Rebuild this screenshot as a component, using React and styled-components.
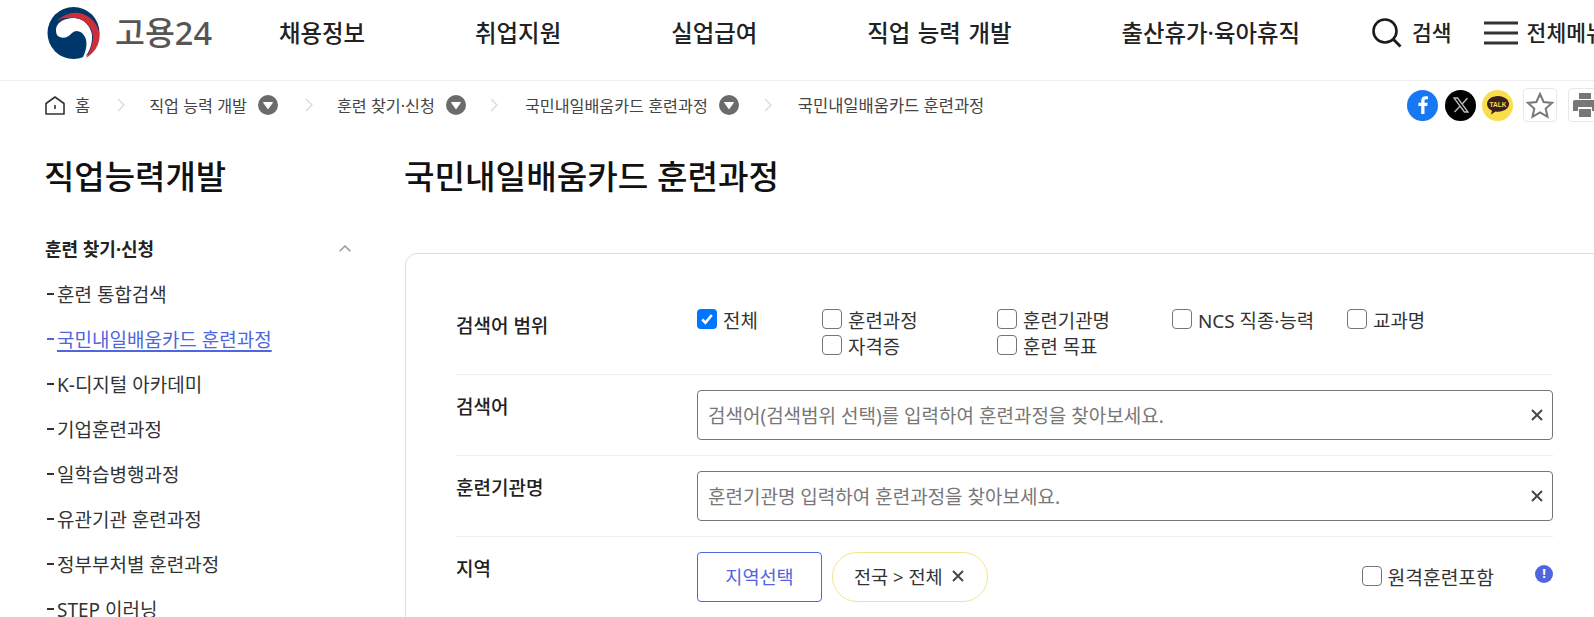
import React from "react";
import styled, { createGlobalStyle } from "styled-components";

const Global = createGlobalStyle`
  html, body { margin: 0; padding: 0; background: #fff; overflow: hidden; }
  body { font-family: "Noto Sans", "Noto Sans CJK KR", sans-serif; color: #222; }
  * { box-sizing: border-box; }
`;
const Page = styled.div`width: 1594px; height: 617px; overflow: hidden;`;
const Header = styled.header`
  height: 81px; border-bottom: 1px solid #eee; display: flex; align-items: flex-start;
  padding: 7px 0 0 47px; white-space: nowrap;
`;
const Logo = styled.div`display: flex; align-items: center; width: 232px; flex: none; height: 52px;`;
const LogoText = styled.span`
  margin-left: 14px; font-size: 32.5px; font-weight: 500; color: #555; letter-spacing: 0; line-height: 52px;
`;
const Nav = styled.nav`display: flex; gap: 110px; flex: none; height: 52px; align-items: center; padding-bottom: 2px;`;
const NavItem = styled.a`font-size: 23.4px; font-weight: 500; color: #222; word-spacing: 1.5px;`;
const Tools = styled.div`display: flex; align-items: center; height: 52px; margin-left: 72px; flex: none;`;
const ToolLabel = styled.span`font-size: 21.5px; font-weight: 500; color: #222; margin-left: ${p => p.$ml}px; margin-right: ${p => p.$mr || 0}px; margin-bottom: 3px;`;

const Crumbs = styled.div`
  height: 48px; display: flex; align-items: center; padding-left: 45px; white-space: nowrap; position: relative;
  width: 1594px;
`;
const CrumbText = styled.span`font-size: ${p => p.$size || 16.2}px; color: #444; margin-left: ${p => p.$ml || 0}px;`;
const CrumbArrow = styled.svg`width: 8px; height: 14px; margin: 0 ${p => p.$mr || 26}px 0 ${p => p.$ml || 27}px; flex: none;`;
const CrumbDrop = styled.svg`width: 20px; height: 20px; margin-left: 11px; flex: none;`;
const Share = styled.div`display: flex; align-items: center; margin-left: auto; flex: none; margin-right: -8px;`;
const Round = styled.span`
  width: 31px; height: 31px; border-radius: 50%; background: ${p => p.$bg}; margin-right: ${p => p.$mr}px;
  display: flex; align-items: center; justify-content: center; flex: none;
`;
const SquareBtn = styled.span`
  width: 34px; height: 34px; border: 1px solid #e8e8e8; border-radius: 4px; margin-right: ${p => p.$mr || 0}px;
  display: flex; align-items: center; justify-content: center; flex: none;
`;

const Body = styled.div`display: flex; width: 1560px; margin-left: 45px; gap: 50px; padding-top: 2px;`;
const Side = styled.aside`width: 310px; flex: none; padding-right: 4px;`;
const SideTitle = styled.h2`margin: 23px 0 0 -1px; font-size: 33px; font-weight: 500; line-height: 45px; color: #111;`;
const SideHead = styled.div`
  display: flex; align-items: center; justify-content: space-between; margin-top: 31px; height: 36px;
  font-size: 18px; font-weight: 700; color: #222;
`;
const SideList = styled.ul`list-style: none; margin: 5px 0 0; padding: 0;`;
const SideItem = styled.li`
  height: 45px; display: flex; align-items: center; font-size: 19px; color: ${p => p.$active ? "#4f66de" : "#333"}; white-space: nowrap;
  & > i { width: 7px; height: 2px; background: currentColor; margin: 0 3px 0 2px; flex: none; }
  & > span { text-decoration: ${p => p.$active ? "underline" : "none"}; text-decoration-thickness: 2px; text-underline-offset: 3px; }
`;
const Main = styled.main`width: 1200px; flex: none;`;
const Title = styled.h1`margin: 23px 0 0 -1px; font-size: 33.2px; font-weight: 500; line-height: 45px; color: #111;`;
const Card = styled.section`
  margin-top: 54px; border: 1px solid #ddd; border-radius: 12px; padding: 41px 51px 120px 50px;
`;
const Row = styled.div`
  display: grid; grid-template-columns: 241px 1fr; border-bottom: ${p => p.$last ? "none" : "1px solid #eee"};
  padding: ${p => p.$pad || "15px 0 15px"};
`;
const Label = styled.div`font-size: 19px; font-weight: 500; color: #222; line-height: 24px; padding-top: ${p => p.$pt || 0}px;`;
const CheckGrid = styled.div`display: grid; grid-template-columns: 125px repeat(4, 175px); row-gap: 6px; width: 860px; grid-auto-rows: 20px;`;
const Check = styled.label`display: flex; align-items: center; font-size: ${p => p.$size || 18.9}px; color: #333; white-space: nowrap; height: 20px; line-height: 20px;`;
const CheckText = styled.span`margin-top: 3px;`;
const Box = styled.span`
  width: 20px; height: 20px; border-radius: 4px; flex: none; margin-right: 6px; display: flex; align-items: center; justify-content: center;
  border: ${p => p.$on ? "none" : "1px solid #757575"}; background: ${p => p.$on ? "#0075ff" : "#fff"};
`;
const InputWrap = styled.div`
  height: 50px; border: 1px solid #767676; border-radius: 4px; display: flex; align-items: center; justify-content: space-between;
  padding: 0 9px 0 10px; font-size: 19px; color: #777;
`;
const RegionRow = styled.div`display: flex; align-items: center; height: 50px;`;
const RegionBtn = styled.button`
  width: 125px; height: 50px; border: 1px solid #4f66de; border-radius: 4px; background: #fff; color: #4f66de; font: inherit; font-size: 18.6px; padding: 0 0 3px;
`;
const Chip = styled.div`
  margin-left: 10px; width: 156px; height: 50px; border: 1px solid #f3e68c; border-radius: 25px; display: flex; align-items: center;
  font-size: 18.6px; color: #333; gap: 9px; padding: 0 0 3px 21px;
`;
const Remote = styled.div`margin-left: auto; display: flex; align-items: center; margin-top: -2px;`;
const Info = styled.span`
  width: 18px; height: 18px; border-radius: 50%; background: #4f66de; color: #fff; font-size: 13px; font-weight: 700; display: flex; align-items: center;
  justify-content: center; margin-left: 41px; margin-right: 0; line-height: 1; margin-top: -5px;
`;

const Arrow = ({ mr }) => (
  <CrumbArrow $mr={mr} viewBox="0 0 8 14"><path d="M1 1l6 6-6 6" fill="none" stroke="#ddd" strokeWidth="1.5" /></CrumbArrow>
);
const Drop = () => (
  <CrumbDrop viewBox="0 0 20 20"><circle cx="10" cy="10" r="10" fill="#6b6b6b" /><path d="M5.5 7.5h9L10 13.8z" fill="#fff" stroke="#fff" strokeLinejoin="round" /></CrumbDrop>
);
const X = ({ s = 12 }) => (
  <svg width={s} height={s} viewBox="0 0 12 12"><path d="M1 1l10 10M11 1L1 11" stroke="#444" strokeWidth="1.9" /></svg>
);
const Tick = () => (
  <svg width="14" height="14" viewBox="0 0 14 14"><path d="M2.2 7.5l3.2 3.4L11.8 3" fill="none" stroke="#fff" strokeWidth="2.6" /></svg>
);

const Taeguk = () => (
  <svg width="54" height="52" viewBox="0 0 54 52">
    <circle cx="26.500" cy="26" r="26" fill="#00376b" />
    <path d="M9 23C9 16 16 11 27 11C37 11 44 20 45 28C45.500 36 43 44 38 50L36 50C39 44 41 36 38 30C35 24 29 22 25 26C21 31 15 32 11 29C9.500 28 9 25 9 23z" fill="#fff" />
    <path d="M10 14C16 8 24 5 32 6C44 8 52 18 52.500 28C53 38 47 46 39 51C44 43 46 36 46 29C45 20 38 12 28 11C20 10 14 11 10 14z" fill="#cd2e3a" />
  </svg>
);
const Check2 = ({ on, size, children }) => (
  <Check $size={size}><Box $on={on}>{on && <Tick />}</Box><CheckText>{children}</CheckText></Check>
);

const sideItems = ["훈련 통합검색", "국민내일배움카드 훈련과정", "K-디지털 아카데미", "기업훈련과정", "일학습병행과정", "유관기관 훈련과정", "정부부처별 훈련과정", "STEP 이러닝"];

export default function App() {
  return (
    <Page>
      <Global />
      <Header>
        <Logo><Taeguk /><LogoText>고용24</LogoText></Logo>
        <Nav>
          {["채용정보", "취업지원", "실업급여", "직업 능력 개발", "출산휴가·육아휴직"].map(t => <NavItem key={t}>{t}</NavItem>)}
        </Nav>
        <Tools>
          <svg width="30" height="30" viewBox="0 0 30 30"><circle cx="13" cy="13" r="11.5" fill="none" stroke="#1a1a1a" strokeWidth="2.6" /><path d="M21 21l7.5 7.5" stroke="#1a1a1a" strokeWidth="2.8" /></svg>
          <ToolLabel $ml={10} $mr={32}>검색</ToolLabel>
          <svg width="34" height="24" viewBox="0 0 34 24"><path d="M0 2h34M0 12h34M0 22h34" stroke="#333" strokeWidth="3" /></svg>
          <ToolLabel $ml={9}>전체메뉴</ToolLabel>
        </Tools>
      </Header>
      <Crumbs>
        <svg width="20" height="19" viewBox="0 0 20 19"><path d="M1 7.5L10 1l9 6.5V18H1z" fill="none" stroke="#333" strokeWidth="1.6" strokeLinejoin="round" /><path d="M10 9v4" stroke="#333" strokeWidth="1.6" /></svg>
        <CrumbText $ml={10} $size={16.5}>홈</CrumbText>
        <Arrow mr={24} />
        <CrumbText>직업 능력 개발</CrumbText><Drop />
        <Arrow mr={24} />
        <CrumbText>훈련 찾기·신청</CrumbText><Drop />
        <CrumbArrow $ml={24} $mr={27} viewBox="0 0 8 14"><path d="M1 1l6 6-6 6" fill="none" stroke="#ddd" strokeWidth="1.5" /></CrumbArrow>
        <CrumbText>국민내일배움카드 훈련과정</CrumbText><Drop />
        <CrumbArrow $ml={25} $mr={26} viewBox="0 0 8 14"><path d="M1 1l6 6-6 6" fill="none" stroke="#ddd" strokeWidth="1.5" /></CrumbArrow>
        <CrumbText $size={16.5}>국민내일배움카드 훈련과정</CrumbText>
        <Share>
          <Round $bg="#1877f2" $mr={7}>
            <svg width="10" height="18" viewBox="0 0 10 18"><path d="M6.5 18V10h2.700l.5-3.200H6.500V5c0-.9.4-1.700 1.700-1.700H10V.5C9.500.4 8.500.3 7.400.3 5 .3 3.200 1.800 3.200 4.500v2.300H.4V10h2.800v8z" fill="#fff" /></svg>
          </Round>
          <Round $bg="#000" $mr={6}>
            <svg width="16" height="16" viewBox="0 0 16 16"><path d="M1 1h3.600L15 15h-3.600zM14.500 1L9 7.200M7 9.200L1.500 15" fill="none" stroke="#bbb" strokeWidth="1.3" /></svg>
          </Round>
          <Round $bg="#f7df4b" $mr={10}>
            <svg width="24" height="20" viewBox="0 0 24 20"><path d="M12 1C5.800 1 1 4.600 1 9c0 2.900 2 5.300 5 6.700L5 19.500l4.500-3c.800.100 1.600.200 2.500.200 6.200 0 11-3.500 11-7.700S18.200 1 12 1z" fill="#3b1e1e" /><text x="12" y="11.500" textAnchor="middle" fontSize="6.500" fontWeight="700" fill="#f7df4b" fontFamily="Liberation Sans">TALK</text></svg>
          </Round>
          <SquareBtn $mr={11}>
            <svg width="28" height="27" viewBox="0 0 28 27"><path d="M14 2l3.600 8 8.400.9-6.300 5.600 1.800 8.300L14 20.500l-7.500 4.300 1.800-8.300L2 10.900l8.400-.9z" fill="none" stroke="#777" strokeWidth="2" strokeLinejoin="miter" /></svg>
          </SquareBtn>
          <SquareBtn>
            <svg width="26" height="26" viewBox="0 0 26 26"><path d="M7 1h12v6H7zM3 8h20a2 2 0 0 1 2 2v9h-5v-4H6v4H1v-9a2 2 0 0 1 2-2zM7 17h12v8H7z" fill="#777" /></svg>
          </SquareBtn>
        </Share>
      </Crumbs>
      <Body>
        <Side>
          <SideTitle>직업능력개발</SideTitle>
          <SideHead>
            훈련 찾기·신청
            <svg width="12" height="7" viewBox="0 0 12 7"><path d="M.7 6.300L6 1l5.300 5.300" fill="none" stroke="#999" strokeWidth="1.5" /></svg>
          </SideHead>
          <SideList>
            {sideItems.map((t, i) => (
              <SideItem key={t} $active={i === 1}><i /><span>{t}</span></SideItem>
            ))}
          </SideList>
        </Side>
        <Main>
          <Title>국민내일배움카드 훈련과정</Title>
          <Card>
            <Row $pad="14px 0 19px">
              <Label $pt={5}>검색어 범위</Label>
              <CheckGrid>
                <Check2 on>전체</Check2>
                <Check2>훈련과정</Check2>
                <Check2>훈련기관명</Check2>
                <Check2>NCS 직종·능력</Check2>
                <Check2>교과명</Check2>
                <span />
                <Check2>자격증</Check2>
                <Check2>훈련 목표</Check2>
              </CheckGrid>
            </Row>
            <Row>
              <Label $pt={5}>검색어</Label>
              <InputWrap>검색어(검색범위 선택)를 입력하여 훈련과정을 찾아보세요.<X /></InputWrap>
            </Row>
            <Row>
              <Label $pt={5}>훈련기관명</Label>
              <InputWrap>훈련기관명 입력하여 훈련과정을 찾아보세요.<X /></InputWrap>
            </Row>
            <Row $last>
              <Label $pt={5}>지역</Label>
              <RegionRow>
                <RegionBtn>지역선택</RegionBtn>
                <Chip>전국 &gt; 전체<X /></Chip>
                <Remote>
                  <Check2 size={19.3}>원격훈련포함</Check2>
                  <Info>!</Info>
                </Remote>
              </RegionRow>
            </Row>
          </Card>
        </Main>
      </Body>
    </Page>
  );
}
